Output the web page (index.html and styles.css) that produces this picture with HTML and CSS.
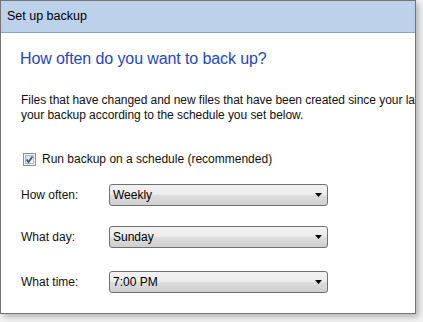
FILE: index.html
```html
<!DOCTYPE html>
<html>
<head>
<meta charset="utf-8">
<link rel="stylesheet" href="styles.css">
</head>
<body>
<div class="dialog">
  <div class="titlebar">Set up backup</div>
  <div class="content">
    <h1 class="heading">How often do you want to back up?</h1>
    <p class="desc">Files that have changed and new files that have been created since your last<br>your backup according to the schedule you set below.</p>
    <div class="check-row">
      <span class="checkbox">
        <svg width="13" height="13" viewBox="0 0 13 13">
          <defs>
            <linearGradient id="cb" x1="0" y1="0" x2="1" y2="1">
              <stop offset="0" stop-color="#dcdcdc"/>
              <stop offset="1" stop-color="#fbfbfb"/>
            </linearGradient>
          </defs>
          <rect x="0.5" y="0.5" width="12" height="12" fill="#f4f4f4" stroke="#8e8f8f"/>
          <rect x="2.5" y="2.5" width="8" height="8" fill="url(#cb)" stroke="#b5b7ba"/>
          <path d="M3.5 6.5 L5.5 9 L9.5 3.5" fill="none" stroke="#3b4f8c" stroke-width="1.7"/>
        </svg>
      </span>
      <span class="check-label">Run backup on a schedule (recommended)</span>
    </div>
    <div class="form">
      <div class="row row1">
        <span class="label">How often:</span>
        <div class="select"><span class="value">Weekly</span><svg class="arrow" width="7" height="4" viewBox="0 0 7 4"><path d="M0 0 H7 L3.5 4 Z" fill="#000"/></svg></div>
      </div>
      <div class="row row2">
        <span class="label">What day:</span>
        <div class="select"><span class="value">Sunday</span><svg class="arrow" width="7" height="4" viewBox="0 0 7 4"><path d="M0 0 H7 L3.5 4 Z" fill="#000"/></svg></div>
      </div>
      <div class="row row3">
        <span class="label">What time:</span>
        <div class="select"><span class="value">7:00 PM</span><svg class="arrow" width="7" height="4" viewBox="0 0 7 4"><path d="M0 0 H7 L3.5 4 Z" fill="#000"/></svg></div>
      </div>
    </div>
  </div>
</div>
</body>
</html>
```
FILE: styles.css
```css
html, body {
  margin: 0;
  padding: 0;
  background: #f3f3f3;
}
body {
  width: 423px;
  height: 322px;
  overflow: hidden;
  font-family: "Liberation Sans", Arial, sans-serif;
  font-size: 12px;
  color: #111;
}
.dialog {
  width: 414px;
  height: 312px;
  border: 1px solid #757575;
  background: #fff;
  box-shadow: 3px 3px 6px rgba(0, 0, 0, 0.25);
  overflow: hidden;
}
.titlebar {
  height: 31px;
  line-height: 30px;
  padding-left: 6px;
  background: #bdd1ea;
  border-bottom: 1px solid #8fa3bd;
  font-size: 12.5px;
  color: #000;
}
.content {
  padding-left: 20px;
}
.heading {
  margin: 16px 0 0 -1px;
  font-size: 16px;
  line-height: 20px;
  font-weight: normal;
  letter-spacing: -0.1px;
  color: #1e48c4;
  white-space: nowrap;
}
.desc {
  margin: 24px 0 0 0;
  line-height: 15px;
  letter-spacing: -0.05px;
  white-space: nowrap;
}
.check-row {
  margin-top: 28px;
  height: 16px;
  display: flex;
  align-items: center;
}
.checkbox {
  display: flex;
  margin-left: 2px;
  width: 13px;
  height: 13px;
}
.check-label {
  margin-left: 6px;
}
.form {
  margin-top: 17px;
  display: flex;
  flex-direction: column;
}
.row {
  display: flex;
  align-items: center;
  height: 22px;
}
.row2 {
  margin-top: 20px;
}
.row3 {
  margin-top: 23px;
}
.label {
  width: 88px;
}
.select {
  box-sizing: border-box;
  width: 219px;
  height: 22px;
  border: 1px solid #707070;
  border-radius: 3px;
  background: linear-gradient(#f2f2f2 0%, #ebebeb 48%, #dddddd 52%, #cfcfcf 100%);
  display: flex;
  align-items: center;
  justify-content: space-between;
  padding: 0 5px 0 3px;
}
.value {
  color: #000;
}
.arrow {
  display: block;
}
```
